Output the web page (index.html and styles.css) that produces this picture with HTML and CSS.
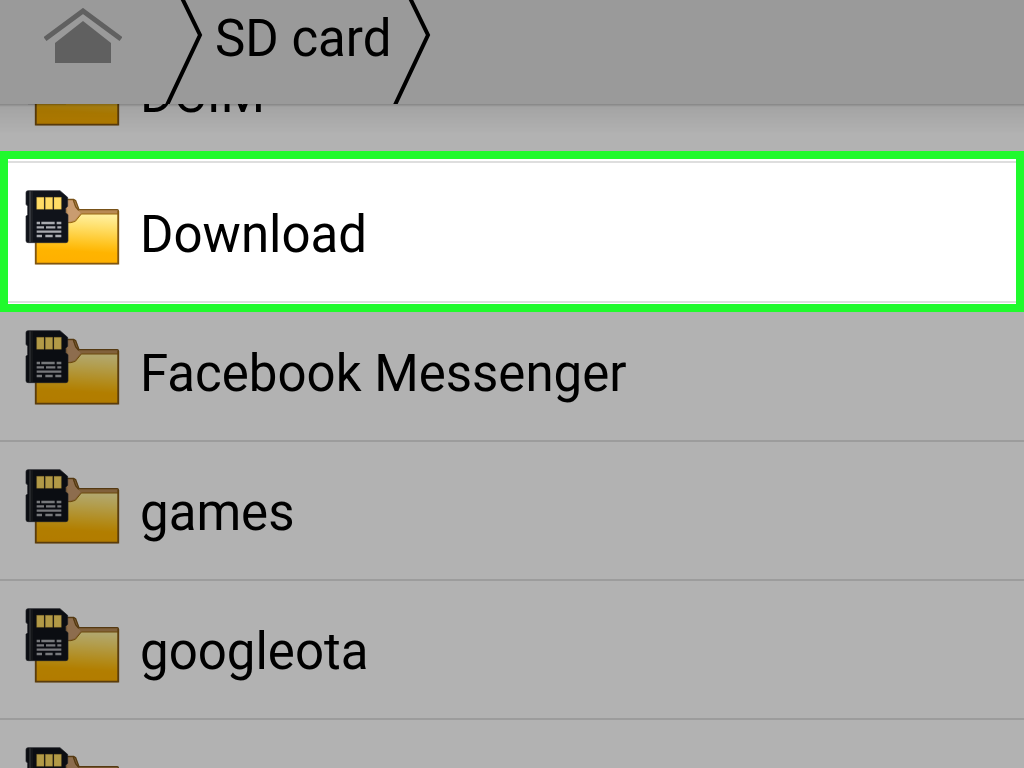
FILE: index.html
```html
<!DOCTYPE html>
<html lang="en">
<head>
  <meta charset="UTF-8">
  <meta name="viewport" content="width=device-width, initial-scale=1.0">
  <title>SD card</title>
  <link rel="stylesheet" href="styles.css">
</head>
<body>

  <!-- shared icons -->
  <svg class="sprite" width="0" height="0" aria-hidden="true">
    <defs>
      <linearGradient id="folder-fill" x1="0.6" y1="0" x2="0.5" y2="1">
        <stop offset="0" stop-color="#fff0a0"></stop>
        <stop offset="0.25" stop-color="#ffdf6a"></stop>
        <stop offset="0.6" stop-color="#ffc21c"></stop>
        <stop offset="0.75" stop-color="#ffb400"></stop>
        <stop offset="1" stop-color="#ffb000"></stop>
      </linearGradient>
    </defs>
    <symbol id="sd-folder" viewBox="45 27 285 228">
      <path d="M150 58H191L197 62L207 89H322Q325 89 325 92V250H78V58Z" fill="#b88a54" stroke="#785219" stroke-width="4"></path>
      <path d="M78 128H183L196 124L214 102H324V251H78Z" fill="url(#folder-fill)" stroke="#9a6810" stroke-width="3"></path>
      <path d="M170 62H189L197 84L212 99L194 121L174 126Z" fill="#c99c70"></path>
      <path d="M190 60L197 80L206 91" fill="none" stroke="#785219" stroke-width="4"></path>
      <path d="M77 187V251H325V93" fill="none" stroke="#805611" stroke-width="5"></path>
      <path d="M54 32H150L173 52V79L167 85V98L174 104V182Q174 188 168 188H54Q48 188 48 182V109L53 104V79L48 73V38Q48 32 54 32Z" fill="#10131a" stroke="#282b31" stroke-width="2"></path>
      <path d="M60 34V186" stroke="#3f4146" stroke-width="5"></path>
      <path d="M66 34V186" stroke="#24262b" stroke-width="4"></path>
      <path d="M80 52H102V88H80ZM106 52H128V88H106ZM132 52H154V88H132Z" fill="#ffdc66" stroke="#b89430" stroke-width="1"></path>
      <path d="M80 129H90M94 129H134M140 129H154M80 142H102M108 142H136M142 142H154M80 155H154M80 168H96M106 168H128M136 168H154" stroke="#a9abb0" stroke-width="7"></path>
    </symbol>
  </svg>

  <header class="topbar">
    <nav class="crumbs">
      <a class="home" href="#" aria-label="Home">
        <svg viewBox="0 0 78 56" width="78" height="56">
          <path d="M1 31L39 3L77 31" fill="none" stroke="#606060" stroke-width="5"></path>
          <path d="M39 13L67 35V55H11V35Z" fill="#606060"></path>
        </svg>
      </a>
      <svg class="arrow" viewBox="0 0 40 104" width="40" height="104">
        <path d="M17 -2L35 35L2 105" fill="none" stroke="#000" stroke-width="4"></path>
      </svg>
      <a class="crumb" href="#">SD card</a>
      <svg class="arrow" viewBox="0 0 40 104" width="40" height="104">
        <path d="M17 -2L35 35L2 105" fill="none" stroke="#000" stroke-width="4"></path>
      </svg>
    </nav>
  </header>

  <ul class="files">
    <li class="file"><a href="#"><svg class="icon"><use href="#sd-folder"></use></svg>DCIM</a></li>
    <li class="file selected"><a href="#"><svg class="icon"><use href="#sd-folder"></use></svg>Download</a></li>
    <li class="file"><a href="#"><svg class="icon"><use href="#sd-folder"></use></svg>Facebook Messenger</a></li>
    <li class="file"><a href="#"><svg class="icon"><use href="#sd-folder"></use></svg>games</a></li>
    <li class="file"><a href="#"><svg class="icon"><use href="#sd-folder"></use></svg>googleota</a></li>
    <li class="file"><a href="#"><svg class="icon"><use href="#sd-folder"></use></svg></a></li>
  </ul>

</body>
</html>
```
FILE: styles.css
```css
* {
  box-sizing: border-box;
}

body {
  margin: 0;
  background-color: #b2b2b2;
  font-family: Roboto, "Liberation Sans", sans-serif;
  font-size: 51px;
  color: #000;
}

a {
  color: inherit;
  text-decoration: none;
}

.sprite {
  position: absolute;
}

.topbar {
  position: fixed;
  top: 0;
  left: 0;
  right: 0;
  z-index: 2;
  height: 104px;
  background-color: #9a9a9a;
}

.topbar::after {
  content: "";
  position: absolute;
  top: 100%;
  left: 0;
  right: 0;
  height: 30px;
  background: linear-gradient(rgba(0, 0, 0, 0.25), rgba(0, 0, 0, 0.08) 3px, transparent);
}

.crumbs {
  display: flex;
  align-items: flex-start;
  padding-left: 44px;
}

.home {
  display: flex;
  margin-right: 43px;
  padding-top: 8px;
}

.crumb {
  margin: 0 2px 0 10px;
  line-height: 78px;
}

.files {
  height: 100vh;
  margin: 0;
  padding: 24px 0 0;
  overflow: hidden;
  list-style: none;
}

.file a {
  display: flex;
  align-items: center;
  gap: 20px;
  height: 139px;
  padding: 4px 25px 0;
  border-bottom: 2px solid #9c9c9c;
}

.icon {
  width: 95px;
  height: 76px;
  margin-bottom: 14px;
  filter: brightness(0.7);
}

/* highlighted row */
.selected {
  position: relative;
  z-index: 1;
}

.selected::before {
  content: "";
  position: absolute;
  inset: -12px 0 -9px;
  border: 8px solid #20fa2d;
  background-color: #fff;
}

.selected a {
  position: relative;
  height: 140px;
  margin: 0 8px;
  padding: 4px 17px 0;
  border-bottom-color: #dedede;
}

.selected a::before {
  content: "";
  position: absolute;
  top: -2px;
  left: 0;
  right: 0;
  height: 2px;
  background-color: #dedede;
}

.selected .icon {
  filter: none;
}
```
